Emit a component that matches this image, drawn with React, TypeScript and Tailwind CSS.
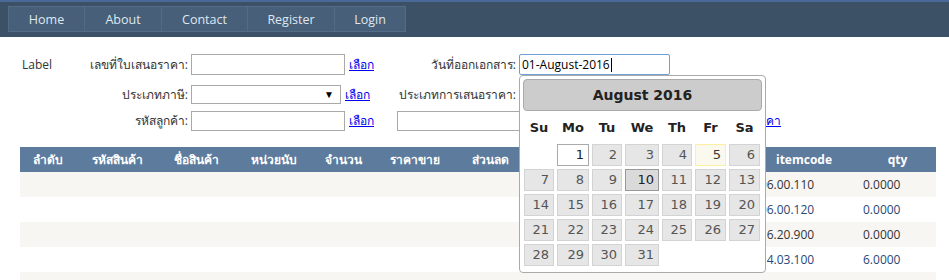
import React from 'react';

const navItems = [
  { label: 'Home', w: 'w-[77px] border-l' },
  { label: 'About', w: 'w-[77px]' },
  { label: 'Contact', w: 'w-[86px]' },
  { label: 'Register', w: 'w-[87px]' },
  { label: 'Login', w: 'w-[71px]' },
];

const dayNames = ['Su', 'Mo', 'Tu', 'We', 'Th', 'Fr', 'Sa'];

const weeks: (number | null)[][] = [
  [null, 1, 2, 3, 4, 5, 6],
  [7, 8, 9, 10, 11, 12, 13],
  [14, 15, 16, 17, 18, 19, 20],
  [21, 22, 23, 24, 25, 26, 27],
  [28, 29, 30, 31, null, null, null],
];

const columns = [
  { title: 'ลำดับ', w: 'w-[55px]' },
  { title: 'รหัสสินค้า', w: 'w-[85px]' },
  { title: 'ชื่อสินค้า', w: 'w-[72px]' },
  { title: 'หน่วยนับ', w: 'w-[83px]' },
  { title: 'จำนวน', w: 'w-[56px]' },
  { title: 'ราคาขาย', w: 'w-[88px]' },
  { title: 'ส่วนลด', w: 'w-[63px]' },
  { title: 'ราคารวม', w: 'w-[113px]' },
  { title: 'หมายเหตุ', w: 'w-[114px]' },
  { title: 'itemcode', w: 'w-[110px]' },
  { title: 'qty', w: 'w-[77px]' },
];

const rows = [
  { code: '106.00.110', qty: '0.0000' },
  { code: '106.00.120', qty: '0.0000' },
  { code: '116.20.900', qty: '0.0000' },
  { code: '114.03.100', qty: '6.0000' },
  { code: '114.03.200', qty: '1.0000' },
];

const calGrid = 'grid grid-cols-[30px_32px_30px_34px_30px_31px_31px] gap-x-[3px]';

function dayClass(d: number) {
  if (d === 1) return 'bg-white border-[#aaaaaa] text-[#212121]';
  if (d === 5) return 'bg-[#fbf9ee] border-[#fcefa1] text-[#363636]';
  if (d === 10) return 'bg-[#dadada] border-[#999999] text-[#212121]';
  return 'bg-[#e6e6e6] border-[#d3d3d3] text-[#555555]';
}

function Link({ children }: { children: React.ReactNode }) {
  return <a href="#" className="whitespace-nowrap text-[#0000ee] underline">{children}</a>;
}

function DatePicker() {
  return (
    <div className="absolute left-[519px] top-[75px] w-[247px] rounded-[4px] border border-[#aaaaaa] bg-white p-[3px] pb-[6px] font-['DejaVu_Sans',Verdana,sans-serif]">
      <div className="flex h-[32px] items-center justify-center rounded-[4px] border border-[#aaaaaa] bg-[#cccccc] text-[14px] font-bold text-[#222222]">
        August 2016
      </div>
      <div className={`${calGrid} ml-[1px] mt-[2px] h-[30px] items-center`}>
        {dayNames.map((d) => (
          <div key={d} className="text-center text-[13px] font-bold text-[#222222]">
            {d}
          </div>
        ))}
      </div>
      <div className={`${calGrid} ml-[1px] mt-[1px] gap-y-[3px]`}>
        {weeks.flat().map((d, i) =>
          d === null ? (
            <div key={i} className="h-[22px]" />
          ) : (
            <div
              key={i}
              className={`flex h-[22px] items-center justify-end border pr-[4px] text-[13px] ${dayClass(d)}`}
            >
              {d}
            </div>
          )
        )}
      </div>
    </div>
  );
}

export default function App() {
  return (
    <div className="relative min-h-[280px] bg-white font-['Open_Sans','Noto_Sans',Tahoma,sans-serif] text-[12px] text-[#333333]">
      <nav className="flex h-[37px] border-t-2 border-[#4a6898] bg-[#3c5066] pl-[8px] pt-[4px]">
        {navItems.map((n) => (
          <div
            key={n.label}
            className={`flex h-[26px] items-center justify-center border-y border-r border-[#536c86] bg-[#475f78] pt-[3px] text-[12.5px] text-[#dfe8f1] ${n.w}`}
          >
            {n.label}
          </div>
        ))}
      </nav>

      <div className="pt-[17px]">
        <div className="flex h-[21px] items-center">
          <div className="flex w-[188px] justify-between pl-[22px]">
            <span>Label</span>
            <span>เลขที่ใบเสนอราคา:</span>
          </div>
          <input readOnly className="ml-[3px] h-[21px] w-[154px] border border-[#a9a9a9] bg-white outline-none" />
          <div className="w-[36px] pl-[4px]">
            <Link>เลือก</Link>
          </div>
          <div className="w-[135px] text-right">วันที่ออกเอกสาร:</div>
          <div className="ml-[3px] flex h-[21px] w-[151px] items-center rounded-[2px] border border-[#6d9fd8] bg-white pl-[2px] text-black">
            <span>01-August-2016</span>
            <span className="ml-px h-[14px] w-px bg-black" />
          </div>
        </div>

        <div className="mt-[10px] flex h-[19px] items-center">
          <div className="w-[188px] text-right">ประเภทภาษี:</div>
          <div className="ml-[3px] flex h-[19px] w-[150px] items-center justify-end border border-[#a9a9a9] bg-white pr-[6px] text-[10px] text-black">
            ▼
          </div>
          <div className="w-[40px] pl-[4px]">
            <Link>เลือก</Link>
          </div>
          <div className="w-[135px] text-right">ประเภทการเสนอราคา:</div>
          <div className="ml-[3px] h-[19px] w-[150px] border border-[#a9a9a9] bg-white" />
        </div>

        <div className="mt-[7px] flex h-[20px] items-center">
          <div className="w-[188px] text-right">รหัสลูกค้า:</div>
          <input readOnly className="ml-[3px] h-[20px] w-[154px] border border-[#a9a9a9] bg-white outline-none" />
          <div className="w-[52px] pl-[4px]">
            <Link>เลือก</Link>
          </div>
          <div className="flex w-[384px] items-center justify-between">
            <input readOnly className="h-[20px] w-[250px] border border-[#a9a9a9] bg-white outline-none" />
            <Link>เลือกใบเสนอราคา</Link>
          </div>
        </div>
      </div>

      <table className="ml-[20px] mt-[16px] w-[916px] table-fixed border-collapse text-[12px]">
        <thead>
          <tr className="h-[25px] bg-[#5d7b9d] font-bold text-white">
            {columns.map((c) => (
              <th key={c.title} className={`${c.w} p-0 text-center font-bold`}>
                {c.title}
              </th>
            ))}
          </tr>
        </thead>
        <tbody>
          {rows.map((r, i) => (
            <tr
              key={i}
              className={`h-[25px] ${i % 2 === 0 ? 'bg-[#f7f6f3] text-[#333333]' : 'bg-white text-[#284775]'}`}
            >
              {columns.slice(0, 9).map((c) => (
                <td key={c.title} className="p-0" />
              ))}
              <td className="p-0 pl-[4px]">{r.code}</td>
              <td className="p-0 pl-[4px]">{r.qty}</td>
            </tr>
          ))}
        </tbody>
      </table>

      <DatePicker />
    </div>
  );
}
